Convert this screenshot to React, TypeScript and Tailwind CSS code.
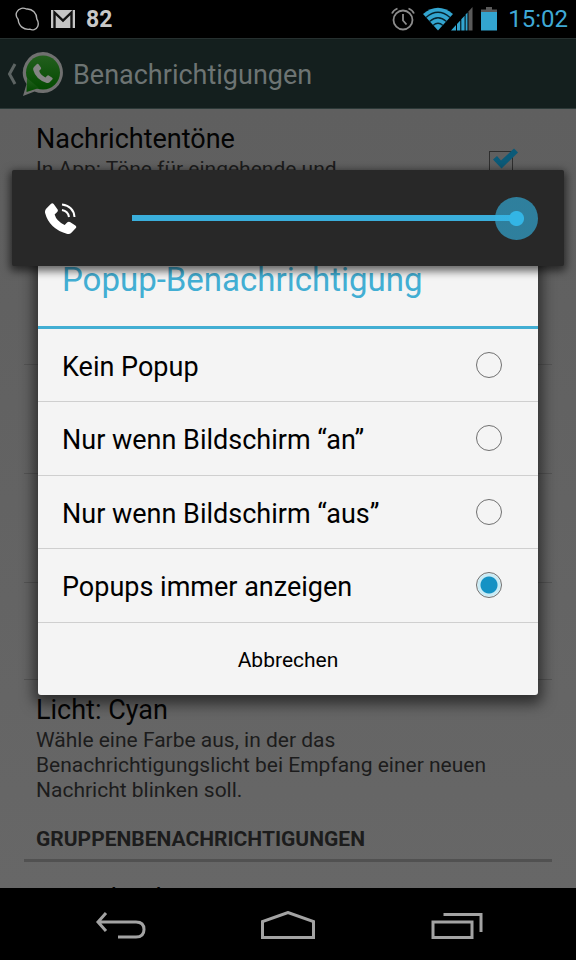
import { useState } from 'react'

const options = ['Kein Popup', 'Nur wenn Bildschirm “an”', 'Nur wenn Bildschirm “aus”', 'Popups immer anzeigen']

const HANDSET = 'M2 5.500 6 1.500q1.200-1 2.200.3l3.200 4.400q.8 1.200-.2 2.200L9 10.500q1.500 5.500 8.500 9l2.300-2.300q1-1 2.200-.2l4.600 3q1.400 1 .2 2.300l-3.600 3.800q-1.500 1.500-4 .8Q4.500 22.500 1 9.500 .400 7 2 5.500Z'

function StatusBar() {
  return (
    <header className="flex h-[38px] shrink-0 items-center bg-black pr-2 pl-3.5">
      <svg width="26" height="28" viewBox="0 0 28 28" fill="none" stroke="#b4b4b4" strokeWidth="1.500">
        <path d="M8 2.500c2.500-.8 4.500.3 6 .8 6-.2 10.500 4.500 10.500 10.500 1.500 2.500 2.200 5.500 1 8.200-1.600 3.600-5.500 4.500-8.500 3-6.500.9-12-3.500-12.500-10.500C2 11.500 2 8.500 3 6.500c1-2.200 2.600-3.500 5-4Z" />
      </svg>
      <svg className="ml-[11px]" width="24" height="18" viewBox="0 0 24 18">
        <path fill="#c4c4c4" d="M0 0h24v18H0z" />
        <path fill="none" stroke="#111" strokeWidth="2.400" d="M3.500 18V2.500L12 10.500l8.500-8V18" />
      </svg>
      <span className="ml-[11px] text-[23px] leading-none font-bold text-[#c8c8c8]">82</span>

      <svg className="ml-auto" width="24" height="24" viewBox="0 0 24 24" fill="none" stroke="#8c8c8c" strokeWidth="1.800">
        <circle cx="12" cy="13" r="9.500" />
        <path d="M12 7v6.500l3.500 4M1 6.500Q2.500 3 6.500 1.500M23 6.500Q21.500 3 17.500 1.500" />
      </svg>
      <svg className="ml-2" width="50" height="24" viewBox="0 0 50 24">
        <path fill="#33a5d0" d="M0 7Q15-5.500 30 7L15 23.500Z" />
        <path fill="none" stroke="#06232e" strokeWidth="1.300" d="M3 10.500Q15 0 27 10.500M6.500 14.500q8.500-7.500 17 0M10 18.500q5-4.500 10 0" />
        <path fill="#33a5d0" d="M28 23.500 33 18v5.500zM34 17l3.300-3.600v10.100H34zM38.300 12.300l3.300-3.600v14.800h-3.300zM42.600 7.600 44.500 5.500v18h-1.900z" />
        <path fill="#5a5a5a" d="M45.500 4.500 49.500 0v23.500h-4z" />
      </svg>
      <svg className="ml-2" width="16" height="24" viewBox="0 0 16 24">
        <path fill="#5a5a5a" d="M5 0h6v2.500h5V5H0V2.500h5z" />
        <path fill="#33a5d0" d="M0 5h16v18.500H0z" />
      </svg>
      <span className="ml-[11px] text-[24px] leading-none text-[#3fa9d6]">15:02</span>
    </header>
  )
}

function ActionBar() {
  return (
    <div className="flex h-[71px] shrink-0 items-center border-y border-t-[#26302f] border-b-[#2c3938] bg-[#141f1e] pl-1.5">
      <a href="#zurueck" aria-label="Zurück" className="flex items-center gap-1">
        <svg width="11" height="22" viewBox="0 0 11 22" fill="none" stroke="#5d6463" strokeWidth="3">
          <path d="M9 1 3.500 11 9 21" />
        </svg>
        <svg width="44" height="46" viewBox="0 0 44 46">
          <defs>
            <linearGradient id="bubble" x1="0" y1="0" x2="0" y2="1">
              <stop offset="0" stopColor="#235f1e" />
              <stop offset="1" stopColor="#034a00" />
            </linearGradient>
          </defs>
          <path fill="#707070" d="M22 1a20.500 20.500 0 1 1-8.500 39.400L2 45l3.500-12A20.500 20.500 0 0 1 22 1Z" />
          <circle cx="22" cy="21.500" r="17" fill="url(#bubble)" />
          <path fill="url(#bubble)" d="M6 27 5.500 41 18 37z" />
          <path fill="#858585" transform="translate(11.500 12) scale(.74)" d={HANDSET} />
        </svg>
      </a>
      <h1 className="ml-2 pt-0.5 text-[27px] leading-8 text-[#6d7473]">Benachrichtigungen</h1>
    </div>
  )
}

function Settings() {
  return (
    <main className="h-0 flex-1 overflow-hidden bg-linear-to-b from-[#5f5f5f] to-[#676767] px-6 text-[#1c1c1c]">
      <label className="flex h-[109px] items-start justify-between border-b border-[#545454] pt-3 pr-[39px] pl-3">
        <span>
          <span className="block text-[27px] leading-9 text-[#040404]">Nachrichtentöne</span>
          <span className="block text-[21px] leading-[25px]">In App: Töne für eingehende und</span>
        </span>
        <span className="relative mt-[30px]">
          <input type="checkbox" defaultChecked className="block size-6 appearance-none border border-[#2e2e2e]" />
          <svg className="pointer-events-none absolute -top-1 left-1" width="26" height="24" viewBox="0 0 26 24">
            <path fill="#0b5a78" d="M0 12.500 4 9l4 4.500L21 1.500 25 5.500 8.500 21.500Z" />
          </svg>
        </span>
      </label>
      <div className="h-[147px] border-b border-[#545454]" />
      <div className="h-[109px] border-b border-[#545454]" />
      <div className="h-[109px] border-b border-[#545454]" />
      <div className="h-[97px] border-b border-[#545454]" />
      <section className="px-3 pt-3">
        <h2 className="text-[27px] leading-9 text-[#040404]">Licht: Cyan</h2>
        <p className="max-w-[480px] text-[21px] leading-[25px]">
          Wähle eine Farbe aus, in der das Benachrichtigungslicht bei Empfang einer neuen Nachricht blinken soll.
        </p>
      </section>
      <h3 className="mt-[22px] border-b-3 border-[#515151] px-3 pb-1.5 text-[21px] leading-7 font-bold">
        GRUPPENBENACHRICHTIGUNGEN
      </h3>
      <p className="px-3 pt-[19px] text-[27px] leading-9 text-[#040404]">Benachrichtigungston</p>
    </main>
  )
}

function PopupDialog() {
  const [selected, setSelected] = useState(3)

  return (
    <div className="absolute inset-x-0 top-[38px] bottom-[72px] flex items-center px-[38px]">
      <div role="dialog" aria-labelledby="dialog-title" className="w-full overflow-hidden rounded-[3px] bg-[#f4f4f4] text-black shadow-[0_5px_14px_4px_rgba(0,0,0,0.55)]">
        <h2 id="dialog-title" className="flex h-[97px] items-center border-b-3 border-[#42aed3] px-6 pt-0.5 text-[33px] text-[#42aed3]">
          Popup-Benachrichtigung
        </h2>
        <div className="grid h-[294px] grid-rows-4">
          {options.map((label, i) => (
            <label key={label} className="flex items-center justify-between border-b border-[#cfcfcf] pr-9 pl-6 text-[27px]">
              <span className="pt-1">{label}</span>
              <input
                type="radio"
                name="popup"
                checked={selected === i}
                onChange={() => setSelected(i)}
                className="size-[26px] appearance-none rounded-full border border-[#707070] checked:bg-[radial-gradient(circle,#1492c4_0_8px,#c9ebf5_9px_11px,#e6f4f8_12px)]"
              />
            </label>
          ))}
        </div>
        <button type="button" className="h-[72px] w-full pt-1 text-[21px]">Abbrechen</button>
      </div>
    </div>
  )
}

function VolumePanel() {
  return (
    <div className="absolute inset-x-3 top-[170px] flex h-24 items-center rounded-[2px] bg-[#282828] pr-[26px] pl-8 shadow-[0_3px_9px_2px_rgba(0,0,0,0.6)]">
      <svg width="33" height="33" viewBox="0 0 33 33" className="shrink-0">
        <path fill="#fff" transform="scale(1.180)" d={HANDSET} />
        <path fill="none" stroke="#fff" strokeWidth="2" d="M18 2.500Q29.500 4 30.500 15M18 8q6 1 7 7" />
      </svg>
      <input
        type="range"
        aria-label="Lautstärke"
        defaultValue={100}
        className="ml-[55px] h-[43px] min-w-0 flex-1 appearance-none bg-[linear-gradient(#3aaedb,#3aaedb)] bg-[length:calc(100%-22px)_6px] bg-left bg-no-repeat [&::-webkit-slider-thumb]:size-[43px] [&::-webkit-slider-thumb]:appearance-none [&::-webkit-slider-thumb]:rounded-full [&::-webkit-slider-thumb]:bg-[radial-gradient(circle,#33b5e5_0_7px,rgba(51,181,229,0.62)_8px)]"
      />
    </div>
  )
}

function NavBar() {
  return (
    <nav className="flex h-[72px] shrink-0 items-center justify-around bg-black px-[38px] pt-1 text-[#a3a3a3]">
      <button type="button" aria-label="Zurück">
        <svg width="56" height="30" viewBox="0 0 56 30" fill="none" stroke="currentColor" strokeWidth="3">
          <path d="M13 2 5 11l8 9M5 11h38q8 0 8 7.500T43 26H25" />
        </svg>
      </button>
      <button type="button" aria-label="Startseite">
        <svg width="56" height="30" viewBox="0 0 56 30" fill="none" stroke="currentColor" strokeWidth="3">
          <path d="M2.500 26.500v-16L28 1.500l25.500 9v16Z" />
        </svg>
      </button>
      <button type="button" aria-label="Letzte Apps">
        <svg width="56" height="30" viewBox="0 0 56 30" fill="none" stroke="currentColor" strokeWidth="3">
          <path d="M6 11h39v15.500H6zM16.500 3.500h37.500V21" />
        </svg>
      </button>
    </nav>
  )
}

export default function App() {
  return (
    <div className="relative flex h-screen flex-col overflow-hidden bg-black font-[Roboto,sans-serif]">
      <StatusBar />
      <ActionBar />
      <Settings />
      <NavBar />
      <PopupDialog />
      <VolumePanel />
    </div>
  )
}
